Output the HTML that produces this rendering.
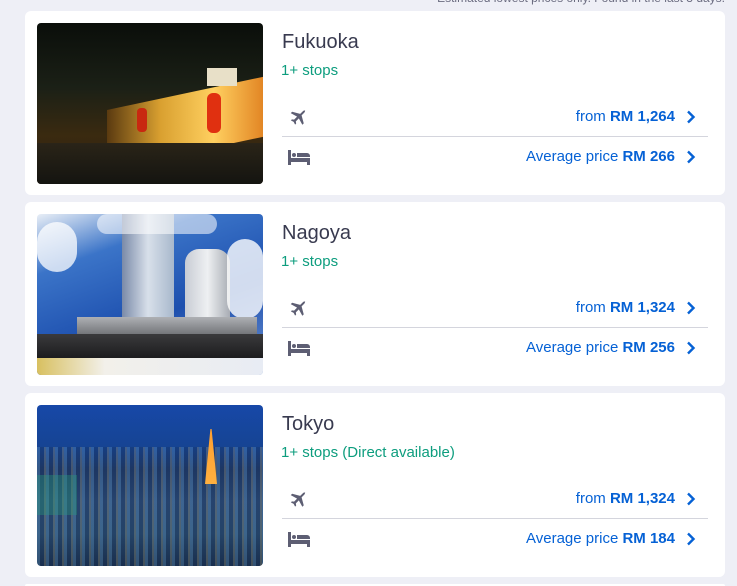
<!DOCTYPE html>
<html><head><meta charset="utf-8"><style>
*{margin:0;padding:0;box-sizing:border-box}
html,body{width:737px;height:586px;overflow:hidden}
body{background:#eeeff6;font-family:"Liberation Sans",sans-serif;position:relative}
.note{position:absolute;right:12px;top:-9px;font-size:12px;color:#6b6c80}
.card{position:absolute;left:25px;width:700px;height:184px;background:#fff;border-radius:6px}
.img{position:absolute;left:12px;top:12px;width:226px;height:161px;border-radius:4px;overflow:hidden}
.title{position:absolute;left:257px;top:20px;font-size:20px;color:#383a4f}
.stops{position:absolute;left:256px;top:51px;font-size:15px;color:#0d9d7e}
.row{position:absolute;left:257px;width:426px;height:40px}
.r1{top:86px;border-bottom:1px solid #d4d5dd}
.r2{top:126px}
.row svg.ic{position:absolute;left:6px;top:11px}
.price{position:absolute;right:33px;top:11px;font-size:15px;color:#0561d5}
.price b{font-weight:bold}
.chev{position:absolute;right:12px;top:13px}
</style></head><body>
<div class="note">Estimated lowest prices only. Found in the last 3 days.</div>

<div class="card" style="top:11px">
 <div class="img" style="background:linear-gradient(180deg,#0a0e0a 0%,#1b2016 40%,#3a2a10 70%,#2a1c0c 100%)">
  <div style="position:absolute;left:70px;top:70px;width:160px;height:60px;background:linear-gradient(90deg,#5a3a10,#d9a030,#ffd060,#e08020);transform:skewY(-12deg)"></div>
  <div style="position:absolute;left:170px;top:70px;width:14px;height:40px;background:#e03010;border-radius:6px"></div>
  <div style="position:absolute;left:100px;top:85px;width:10px;height:24px;background:#c82810;border-radius:4px"></div>
  <div style="position:absolute;left:170px;top:45px;width:30px;height:18px;background:#e8e0c8"></div>
  <div style="position:absolute;left:0;top:120px;width:226px;height:41px;background:linear-gradient(180deg,#2a2418,#141410)"></div>
 </div>
 <div class="title">Fukuoka</div>
 <div class="stops">1+ stops</div>
 <div class="row r1"><svg class="ic" width="20" height="20" viewBox="0 0 24 24"><path fill="#5d5e73" d="M21 3.5c-.8-.8-2.2-.6-3 .2l-3.4 3.4L5 4.5 3.3 6.2l7.6 4.2-3.6 3.6-2.6-.4L3.4 14.9l3.4 1.7 1.7 3.4 1.3-1.3-.4-2.6 3.6-3.6 4.2 7.6 1.7-1.7-2.6-9.6 3.4-3.4c.8-.8 1-2.2.2-3z"/></svg><div class="price">from <b>RM 1,264</b></div><svg class="chev" width="10" height="14" viewBox="0 0 10 14"><path d="M2 1.5 7.5 7 2 12.5" stroke="#0561d5" stroke-width="2.4" fill="none"/></svg></div>
 <div class="row r2"><svg class="ic" width="22" height="18" viewBox="0 0 22 18"><path fill="#5d5e73" d="M0 2h3v8h19v7h-3v-3H3v3H0z"/><circle cx="6" cy="7" r="2" fill="#5d5e73"/><path fill="#5d5e73" d="M9 5h10a3 3 0 0 1 3 3v1H9z"/></svg><div class="price">Average price <b>RM 266</b></div><svg class="chev" width="10" height="14" viewBox="0 0 10 14"><path d="M2 1.5 7.5 7 2 12.5" stroke="#0561d5" stroke-width="2.4" fill="none"/></svg></div>
</div>

<div class="card" style="top:202px">
 <div class="img" style="background:linear-gradient(160deg,#e8eef6 0%,#3b74c8 25%,#1d4fae 60%,#6a90d0 100%)">
  <div style="position:absolute;left:85px;top:0;width:52px;height:110px;background:linear-gradient(90deg,#7a8aa8,#d8e0ea,#a8b8cc)"></div>
  <div style="position:absolute;left:148px;top:35px;width:45px;height:90px;background:linear-gradient(90deg,#c8ccd4,#eef0f2,#a8acb4);border-radius:14px 14px 0 0"></div>
  <div style="position:absolute;left:60px;top:0;width:120px;height:20px;background:rgba(255,255,255,.55);border-radius:10px"></div>
  <div style="position:absolute;left:0;top:8px;width:40px;height:50px;background:rgba(255,255,255,.75);border-radius:20px"></div>
  <div style="position:absolute;left:190px;top:25px;width:36px;height:80px;background:rgba(255,255,255,.8);border-radius:18px"></div>
  <div style="position:absolute;left:40px;top:103px;width:180px;height:20px;background:linear-gradient(#aeb0b4,#6a6c70)"></div>
  <div style="position:absolute;left:0;top:120px;width:226px;height:26px;background:linear-gradient(#3a3a3c,#1a1a1c)"></div>
  <div style="position:absolute;left:0;top:144px;width:226px;height:17px;background:linear-gradient(90deg,#d8c060,#f2f0ea 30%,#e8ecf4)"></div>
 </div>
 <div class="title">Nagoya</div>
 <div class="stops">1+ stops</div>
 <div class="row r1"><svg class="ic" width="20" height="20" viewBox="0 0 24 24"><path fill="#5d5e73" d="M21 3.5c-.8-.8-2.2-.6-3 .2l-3.4 3.4L5 4.5 3.3 6.2l7.6 4.2-3.6 3.6-2.6-.4L3.4 14.9l3.4 1.7 1.7 3.4 1.3-1.3-.4-2.6 3.6-3.6 4.2 7.6 1.7-1.7-2.6-9.6 3.4-3.4c.8-.8 1-2.2.2-3z"/></svg><div class="price">from <b>RM 1,324</b></div><svg class="chev" width="10" height="14" viewBox="0 0 10 14"><path d="M2 1.5 7.5 7 2 12.5" stroke="#0561d5" stroke-width="2.4" fill="none"/></svg></div>
 <div class="row r2"><svg class="ic" width="22" height="18" viewBox="0 0 22 18"><path fill="#5d5e73" d="M0 2h3v8h19v7h-3v-3H3v3H0z"/><circle cx="6" cy="7" r="2" fill="#5d5e73"/><path fill="#5d5e73" d="M9 5h10a3 3 0 0 1 3 3v1H9z"/></svg><div class="price">Average price <b>RM 256</b></div><svg class="chev" width="10" height="14" viewBox="0 0 10 14"><path d="M2 1.5 7.5 7 2 12.5" stroke="#0561d5" stroke-width="2.4" fill="none"/></svg></div>
</div>

<div class="card" style="top:393px">
 <div class="img" style="background:linear-gradient(180deg,#1748a8 0%,#164494 25%,#1f3a6a 40%,#2a4a78 60%,#284a70 80%,#1a3050 100%)">
  <div style="position:absolute;left:0;top:42px;width:226px;height:119px;background:repeating-linear-gradient(90deg,rgba(120,180,220,.25) 0 3px,rgba(20,40,70,.2) 3px 7px,rgba(230,200,120,.2) 7px 9px)"></div>
  <div style="position:absolute;left:168px;top:24px;width:12px;height:55px;background:linear-gradient(#ffa030,#ffb040);clip-path:polygon(45% 0,55% 0,100% 100%,0 100%)"></div>
  <div style="position:absolute;left:0;top:70px;width:40px;height:40px;background:rgba(40,160,120,.35)"></div>
 </div>
 <div class="title">Tokyo</div>
 <div class="stops">1+ stops (Direct available)</div>
 <div class="row r1"><svg class="ic" width="20" height="20" viewBox="0 0 24 24"><path fill="#5d5e73" d="M21 3.5c-.8-.8-2.2-.6-3 .2l-3.4 3.4L5 4.5 3.3 6.2l7.6 4.2-3.6 3.6-2.6-.4L3.4 14.9l3.4 1.7 1.7 3.4 1.3-1.3-.4-2.6 3.6-3.6 4.2 7.6 1.7-1.7-2.6-9.6 3.4-3.4c.8-.8 1-2.2.2-3z"/></svg><div class="price">from <b>RM 1,324</b></div><svg class="chev" width="10" height="14" viewBox="0 0 10 14"><path d="M2 1.5 7.5 7 2 12.5" stroke="#0561d5" stroke-width="2.4" fill="none"/></svg></div>
 <div class="row r2"><svg class="ic" width="22" height="18" viewBox="0 0 22 18"><path fill="#5d5e73" d="M0 2h3v8h19v7h-3v-3H3v3H0z"/><circle cx="6" cy="7" r="2" fill="#5d5e73"/><path fill="#5d5e73" d="M9 5h10a3 3 0 0 1 3 3v1H9z"/></svg><div class="price">Average price <b>RM 184</b></div><svg class="chev" width="10" height="14" viewBox="0 0 10 14"><path d="M2 1.5 7.5 7 2 12.5" stroke="#0561d5" stroke-width="2.4" fill="none"/></svg></div>
</div>

<div class="card" style="top:584px;height:2px;border-radius:6px 6px 0 0"></div>
</body></html>
